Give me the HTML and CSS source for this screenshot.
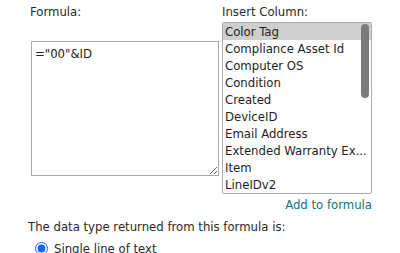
FILE: index.html
```html
<!DOCTYPE html>
<html lang="en">
  <head>
  <link rel="stylesheet" href="styles.css">
  </head>
  <body>
    <div class="formula-box">
      <div class="col-left">
        <label class="lbl">Formula:</label>
        <textarea class="formula-input" spellcheck="false">="00"&amp;ID</textarea>
      </div>
      <div class="col-right">
        <label class="lbl">Insert Column:</label>
        <div class="column-list">
          <div class="opt selected">Color Tag</div>
          <div class="opt">Compliance Asset Id</div>
          <div class="opt">Computer OS</div>
          <div class="opt">Condition</div>
          <div class="opt">Created</div>
          <div class="opt">DeviceID</div>
          <div class="opt">Email Address</div>
          <div class="opt">Extended Warranty Ex...</div>
          <div class="opt">Item</div>
          <div class="opt">LineIDv2</div>
          <div class="scroll-thumb"></div>
        </div>
        <div class="add-row"><a class="add-link" href="#">Add to formula</a></div>
      </div>
    </div>

    <p class="data-type">The data type returned from this formula is:</p>
    <label class="radio-row">
      <input type="radio" name="rtype" checked>
      Single line of text
    </label>
  </body>
</html>
```

FILE: styles.css
```css
html, body { padding: 0; margin: 0; }
body {
  color: #2a2a2a; background: #fff;
  font: 13px/17px "DejaVu Sans Condensed", "DejaVu Sans", sans-serif;
  padding: 3px 0 0 30px;
}
textarea, input, a { font: inherit; }

.formula-box { display: flex; gap: 3px; }
.col-left { width: 189px; }
.col-right { width: 150px; }

.lbl { display: block; height: 17px; margin-bottom: 2px; }

.formula-input {
  display: block; box-sizing: border-box;
  width: 188px; height: 135px; margin: 21px 0 0 1px;
  padding: 3px 3px; resize: both;
  border: 1px solid #ababab; color: #222;
}

.column-list {
  position: relative; overflow: hidden;
  box-sizing: border-box; width: 150px; height: 172px;
  border: 1px solid #ababab; border-radius: 2px;
}
.opt { height: 17px; padding-left: 2px; white-space: nowrap; color: #1e1e1e; }
.opt.selected { background: #cecece; }
.scroll-thumb {
  position: absolute; right: 2px; top: 1px;
  width: 8px; height: 74px; border-radius: 4px;
  background: #7b7b7b;
}

.add-row { text-align: right; margin-top: 2px; }
.add-link { color: #03787c; text-decoration: none; }

.data-type { margin: 5px 0 0 -2px; }
.radio-row { display: flex; align-items: center; gap: 6px; margin-top: 5px; }
.radio-row input {
  margin: 0 0 0 5px; width: 13px; height: 13px;
  accent-color: #0b69f5;
}
```
